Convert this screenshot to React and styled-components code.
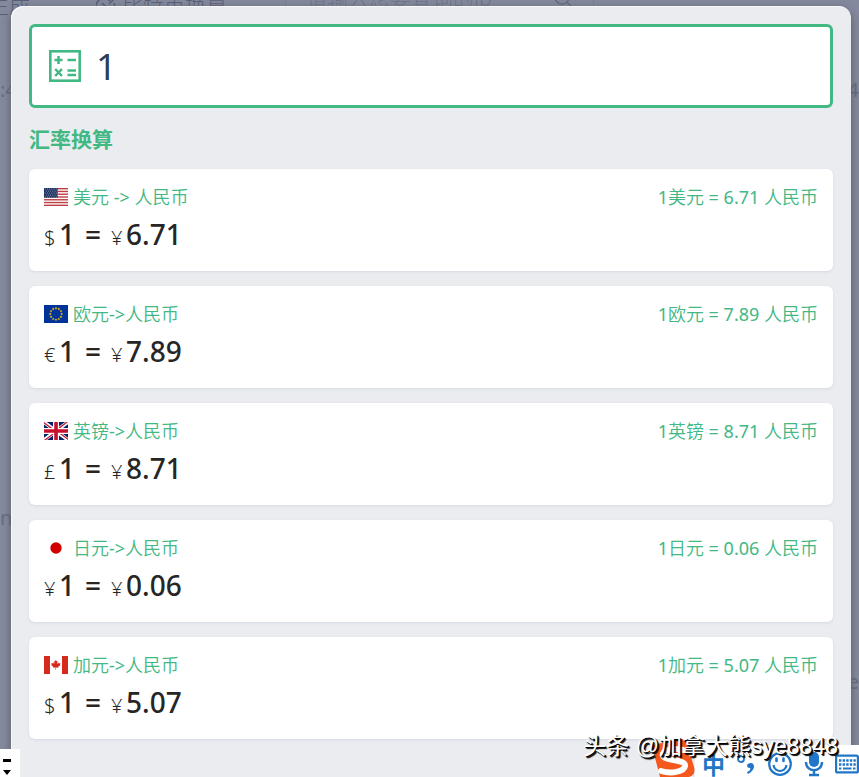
import { useState } from "react";
import styled, { createGlobalStyle } from "styled-components";

const GlobalStyle = createGlobalStyle`
  * {
    box-sizing: border-box;
  }
  body {
    margin: 0;
    font-family: "Noto Sans", "Noto Sans CJK SC", sans-serif;
    overflow: hidden;
  }
`;

const Container = styled.div`
  position: relative;
  height: 100vh;
  overflow: hidden;
  background-color: white;
`;

/* page behind the dialog */

const Page = styled.div`
  height: 100%;
  display: flex;
  flex-direction: column;
  color: #6b6b70;
`;

const Nav = styled.nav`
  height: 18px;
  display: flex;
  align-items: flex-end;
  font-size: 21px;
  line-height: 26px;
  font-weight: 300;
  white-space: nowrap;
`;

const NavLink = styled.a`
  display: flex;
  align-items: center;
  gap: 6px;
  margin-left: ${(props) => props.$space}px;
  color: #303040;
  text-decoration: none;
`;

const NavSearch = styled.div`
  width: 309px;
  height: 40px;
  margin-left: 58px;
  padding: 0 20px;
  display: flex;
  align-items: center;
  justify-content: space-between;
  border: 1px solid #d0d0d8;
`;

const NavInput = styled.input`
  width: 200px;
  border: none;
  background: none;
  font: inherit;
  padding: 0;
  &::placeholder {
    color: #9a9aa4;
    opacity: 1;
  }
`;

const PageRow = styled.div`
  display: flex;
  justify-content: space-between;
  padding-top: ${(props) => props.$top}px;
  font-size: 20px;
  line-height: 28px;
`;

/* dialog */

const Overlay = styled.div`
  position: absolute;
  inset: 0;
  padding: 6px 8px 0 11px;
  background-color: rgba(101, 108, 133, 0.8);
`;

const Modal = styled.main`
  min-height: 100%;
  padding: 18px;
  border-radius: 12px 12px 0 0;
  background-color: #ebecf0;
  box-shadow: inset 1px 1px 0 0 rgba(255, 255, 255, 0.7), 0 3px 8px 0 #555a64;
`;

const SearchBox = styled.label`
  height: 84px;
  display: flex;
  align-items: center;
  gap: 15px;
  padding: 0 17px;
  border: 3px solid #42b883;
  border-radius: 6px;
  background-color: white;
`;

const Input = styled.input`
  flex: 1;
  min-width: 0;
  padding: 2px 0 0;
  border: none;
  outline: none;
  background: none;
  font-family: inherit;
  font-size: 36px;
  line-height: 48px;
  color: #2c3e50;
`;

const Title = styled.h2`
  margin: 17px 0 16px;
  font-size: 21px;
  line-height: 28px;
  font-weight: 700;
  color: #42b883;
`;

const List = styled.ul`
  margin: 0;
  padding: 0;
  list-style: none;
  display: flex;
  flex-direction: column;
  gap: 15px;
`;

const Card = styled.li`
  height: 102px;
  padding: 15px;
  border-radius: 6px;
  background-color: white;
  box-shadow: 0 1px 3px 0 #d4d9e1;
`;

const CardHead = styled.div`
  display: flex;
  align-items: center;
  font-family: "Noto Sans", "Noto Sans CJK SC DemiLight", "Noto Sans CJK SC", sans-serif;
  font-size: 18px;
  line-height: 26px;
  color: #42b883;
`;

const Name = styled.span`
  flex: 1;
  margin-left: 5px;
`;

const Flag = styled.svg`
  width: 24px;
  height: 18px;
`;

const Amount = styled.div`
  display: flex;
  align-items: baseline;
  font-size: 28px;
  line-height: 48px;
  font-weight: 500;
  color: #262626;
`;

const Sign = styled.span`
  width: 15px;
  font-size: 20px;
  font-weight: 300;
`;

const Equals = styled.span`
  margin: 0 10px;
`;

/* what floats over the dialog */

const Handle = styled.div`
  position: absolute;
  left: 0;
  bottom: 0;
  width: 20px;
  height: 28px;
  background-color: white;
`;

const Ime = styled.div`
  position: absolute;
  right: 0;
  bottom: 0;
  width: 164px;
  height: 32px;
  padding: 5px 0 0 7px;
  display: flex;
  align-items: center;
  justify-content: space-between;
  color: #2176c7;
  background-color: white;
`;

const Logo = styled.svg`
  position: absolute;
  left: -43px;
  bottom: 0;
  width: 44px;
  height: 38px;
`;

const Mode = styled.span`
  font-family: "Noto Sans CJK SC", sans-serif;
  font-size: 23px;
  line-height: 24px;
  font-weight: 700;
`;

const Watermark = styled.div`
  position: absolute;
  right: 21px;
  bottom: 14px;
  font-family: "Liberation Sans", "Noto Sans CJK SC", sans-serif;
  font-size: 23px;
  line-height: 34px;
  white-space: nowrap;
  color: white;
  text-shadow: 1px 1px 0 black, 2px 2px 1px black;
`;

const star = (cx, cy, r) =>
  Array.from({ length: 10 }, (_, i) => {
    const a = (Math.PI * i) / 5 - Math.PI / 2;
    const d = i % 2 ? r * 0.4 : r;
    return `${cx + d * Math.cos(a)},${cy + d * Math.sin(a)}`;
  }).join(" ");

const UsFlag = () => (
  <Flag viewBox="0 0 24 18" aria-hidden="true">
    <rect width="24" height="18" fill="white" />
    {[0, 1, 2, 3, 4, 5, 6].map((i) => (
      <rect key={i} y={(i * 36) / 13} width="24" height={18 / 13} fill="#bd3d44" />
    ))}
    <rect width="13.7" height="9.7" fill="#192f5d" />
    {[1, 3, 5, 7, 9].map((y, row) =>
      [0, 1, 2, 3, 4, 5].map((i) => (
        <circle key={`${y}-${i}`} cx={1.2 + i * 2.2 + (row % 2)} cy={y} r="0.5" fill="#c3cbdc" />
      ))
    )}
  </Flag>
);

const EuFlag = () => (
  <Flag viewBox="0 0 24 18" aria-hidden="true">
    <rect width="24" height="18" fill="#039" />
    {Array.from({ length: 12 }, (_, i) => (
      <polygon
        key={i}
        points={star(12 + 5.7 * Math.sin((i * Math.PI) / 6), 9 - 5.7 * Math.cos((i * Math.PI) / 6), 1.5)}
        fill="#fc0"
      />
    ))}
  </Flag>
);

const GbFlag = () => (
  <Flag viewBox="0 0 640 480" aria-hidden="true">
    <path fill="#012169" d="M0 0h640v480H0z" />
    <path fill="#fff" d="m75 0 244 181L562 0h78v62L400 241l240 178v61h-80L320 301 81 480H0v-60l239-178L0 64V0z" />
    <path fill="#c8102e" d="m424 281 216 159v40L369 281zm-184 20 6 35L54 480H0zM640 0v3L391 191l2-44L590 0zM0 0l239 176h-60L0 42z" />
    <path fill="#fff" d="M241 0v480h160V0zM0 160v160h640V160z" />
    <path fill="#c8102e" d="M0 193v96h640v-96zM273 0v480h96V0z" />
  </Flag>
);

const JpFlag = () => (
  <Flag viewBox="0 0 24 18" aria-hidden="true">
    <rect width="24" height="18" fill="white" />
    <circle cx="12" cy="9" r="5.7" fill="#d30000" />
  </Flag>
);

const CaFlag = () => (
  <Flag viewBox="0 0 640 480" aria-hidden="true">
    <path fill="#fff" d="M150 0h340v480H150z" />
    <path
      fill="#d52b1e"
      d="M0 0h160v480H0zm480 0h160v480H480zM201 232l-13 4 61 54c4 14-2 18-5 26l66-9-2 67h14l-3-66 66 8c-4-9-8-13-4-27l61-51-11-4c-8-6 4-32 6-48 0 0-35 12-38 6l-9-17-32 35c-3 1-5-1-6-3l15-75-23 13q-3 2-5-2l-23-46-23 47q-3 3-5 1l-23-13 14 74c-1 3-3 4-6 2l-32-34c-4 6-7 16-12 19s-24-4-36-7c4 15 17 40 8 46"
    />
  </Flag>
);

const CalculatorIcon = () => (
  <svg width="32" height="32" viewBox="0 0 32 32" fill="none" stroke="#42b883" strokeWidth="2.5" aria-hidden="true">
    <rect x="1.3" y="1.3" width="29.4" height="29.4" strokeWidth="2.6" />
    <path d="M5.5 10h8M9.5 6v8M18.5 10H27M18.5 20.5H27M18.5 25H27M6.2 19l6.8 7M13 19l-6.8 7" />
  </svg>
);

const PunctuationIcon = () => (
  <svg width="20" height="26" viewBox="0 0 20 26" aria-hidden="true">
    <circle cx="5" cy="8" r="3" fill="none" stroke="currentColor" strokeWidth="1.8" />
    <path d="M15 12c4 0 5 7-3 11l-1-2c3-1 4-3 3-4-4 0-4-5 1-5" fill="currentColor" />
  </svg>
);

const SmileIcon = () => (
  <svg width="26" height="26" viewBox="0 0 26 26" fill="none" stroke="currentColor" strokeWidth="2.2" aria-hidden="true">
    <circle cx="13" cy="13" r="10.8" />
    <path d="M6.5 14c1 8 12 8 13 0" />
    <path d="M9.5 7.5v2.5M16.5 7.5v2.5" strokeWidth="2.6" strokeLinecap="round" />
  </svg>
);

const MicIcon = () => (
  <svg width="20" height="26" viewBox="0 0 20 26" fill="none" stroke="currentColor" aria-hidden="true">
    <rect x="5" y="1" width="10" height="15" rx="5" fill="currentColor" stroke="none" />
    <path d="M2 11c0 11 16 11 16 0M10 19v5M5 24h10" strokeWidth="2.4" />
  </svg>
);

const KeyboardIcon = () => (
  <svg width="24" height="20" viewBox="0 0 24 20" fill="none" stroke="currentColor" strokeWidth="2.2" aria-hidden="true">
    <rect x="1.1" y="1.6" width="21.8" height="16.8" rx="1.5" />
    <path d="M4 6.5h17M4 10.5h17" strokeWidth="2.4" strokeDasharray="2.4 1.2" />
    <path d="M4 14.5h2.4M8 14.5h8.5M18 14.5h2.5" strokeWidth="2.2" />
  </svg>
);

const RATES = [
  { name: "美元", label: "美元 -> 人民币", sign: "$", rate: 6.71, flag: UsFlag },
  { name: "欧元", label: "欧元->人民币", sign: "€", rate: 7.89, flag: EuFlag },
  { name: "英镑", label: "英镑->人民币", sign: "£", rate: 8.71, flag: GbFlag },
  { name: "日元", label: "日元->人民币", sign: "¥", rate: 0.06, flag: JpFlag },
  { name: "加元", label: "加元->人民币", sign: "$", rate: 5.07, flag: CaFlag },
];

const App = () => {
  const [value, setValue] = useState("1");
  const amount = Number(value) || 0;

  return (
    <Container>
      <GlobalStyle />
      <Page>
        <Nav>
          <NavLink href="#" $space={-12}>生成</NavLink>
          <NavLink href="#" $space={66}>
            <svg width="20" height="20" viewBox="0 0 20 20" fill="none" stroke="currentColor" strokeWidth="1.5" aria-hidden="true">
              <path d="M2 17a8 8 0 0 1 12-11M6 8l8 8M13 9l5-5M18 8a8 8 0 0 1-8 11" />
            </svg>
            比特币换算
          </NavLink>
          <NavSearch>
            <NavInput placeholder="请输入您要查询的ip" aria-label="ip" />
            <svg width="20" height="20" viewBox="0 0 20 20" fill="none" stroke="currentColor" strokeWidth="1.5" aria-hidden="true">
              <circle cx="9" cy="9" r="7" />
              <path d="m14 14 5 5" />
            </svg>
          </NavSearch>
        </Nav>
        <PageRow $top={58}>
          <span>:4</span>
          <span>4</span>
        </PageRow>
        <PageRow $top={400}>
          <span>n</span>
        </PageRow>
        <PageRow $top={136}>
          <span />
          <span>e</span>
        </PageRow>
      </Page>
      <Overlay>
        <Modal>
          <SearchBox>
            <CalculatorIcon />
            <Input value={value} onChange={(e) => setValue(e.target.value)} aria-label="金额" />
          </SearchBox>
          <Title>汇率换算</Title>
          <List>
            {RATES.map(({ name, label, sign, rate, flag: FlagIcon }) => (
              <Card key={name}>
                <CardHead>
                  <FlagIcon />
                  <Name>{label}</Name>
                  <span>
                    1{name} = {rate.toFixed(2)} 人民币
                  </span>
                </CardHead>
                <Amount>
                  <Sign>{sign}</Sign>
                  <span>{amount}</span>
                  <Equals>=</Equals>
                  <Sign>¥</Sign>
                  <span>{(amount * rate).toFixed(2)}</span>
                </Amount>
              </Card>
            ))}
          </List>
        </Modal>
      </Overlay>
      <Handle>
        <svg width="20" height="28" viewBox="0 0 20 28" aria-hidden="true">
          <path d="M3 10h8v3H3zM3 21h8l-4 5z" />
        </svg>
      </Handle>
      <Ime>
        <Logo viewBox="0 0 44 38" aria-hidden="true">
          <path d="M1 11Q0 6 5 5L29 0q5-1 6 4l7 24q2 8-5 10H8z" fill="#f4581c" />
          <path
            d="M31 11C19 8 9 12 11 17c2 5 23 3 22 10-1 6-14 8-24 5"
            fill="none"
            stroke="white"
            strokeWidth="6"
            strokeLinecap="round"
          />
        </Logo>
        <Mode>中</Mode>
        <PunctuationIcon />
        <SmileIcon />
        <MicIcon />
        <KeyboardIcon />
      </Ime>
      <Watermark>头条 @加拿大熊sye8848</Watermark>
    </Container>
  );
};

export default App;
